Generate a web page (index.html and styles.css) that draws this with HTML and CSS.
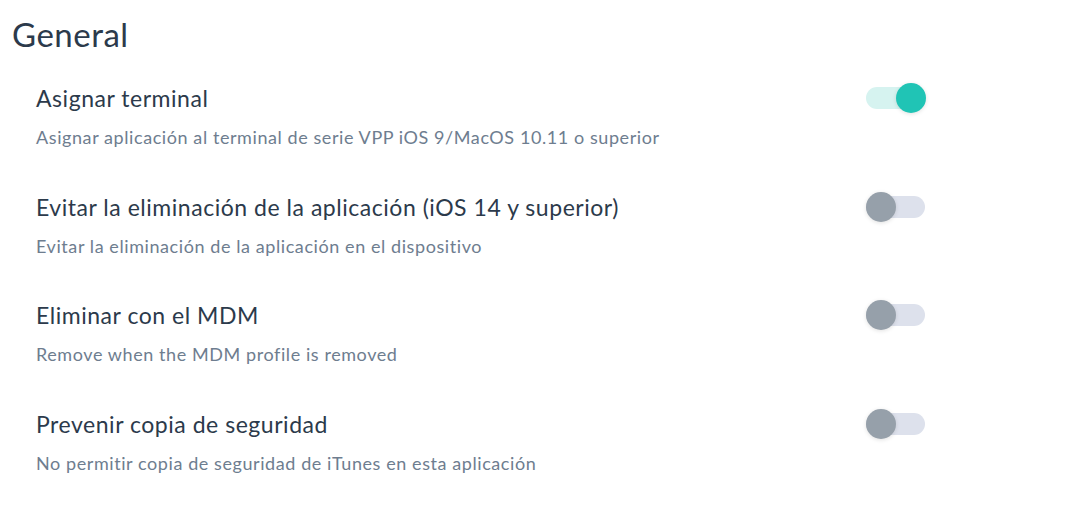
FILE: index.html
```html
<!DOCTYPE html>
<html lang="es">

<head>
    <meta charset="UTF-8">
    <meta name="viewport" content="width=device-width, initial-scale=1.0">
    <title>General</title>
    <link rel="stylesheet" href="styles.css">
</head>

<body>
    <div class="page_div">
        <h1 class="section_title">General</h1>

        <div class="settings">
            <!-- Asignar terminal -->
            <div class="setting_row">
                <div class="setting_text">
                    <div class="setting_name">Asignar terminal</div>
                    <div class="setting_desc">Asignar aplicación al terminal de serie VPP iOS 9/MacOS 10.11 o superior</div>
                </div>
                <div class="switch on">
                    <span class="switch_track"></span>
                    <span class="switch_knob"></span>
                </div>
            </div>

            <div class="setting_row">
                <div class="setting_text">
                    <div class="setting_name">Evitar la eliminación de la aplicación (iOS 14 y superior)</div>
                    <div class="setting_desc">Evitar la eliminación de la aplicación en el dispositivo</div>
                </div>
                <div class="switch">
                    <span class="switch_track"></span>
                    <span class="switch_knob"></span>
                </div>
            </div>

            <div class="setting_row">
                <div class="setting_text">
                    <div class="setting_name">Eliminar con el MDM</div>
                    <div class="setting_desc">Remove when the MDM profile is removed</div>
                </div>
                <div class="switch">
                    <span class="switch_track"></span>
                    <span class="switch_knob"></span>
                </div>
            </div>

            <div class="setting_row">
                <div class="setting_text">
                    <div class="setting_name">Prevenir copia de seguridad</div>
                    <div class="setting_desc">No permitir copia de seguridad de iTunes en esta aplicación</div>
                </div>
                <div class="switch">
                    <span class="switch_track"></span>
                    <span class="switch_knob"></span>
                </div>
            </div>
        </div>
    </div>
</body>

</html>
```

FILE: styles.css
```css
body {
    margin: 0;
    background-color: #ffffff;
    font-family: "Lato", "Noto Sans", sans-serif;
    color: #2c3a4b;
}

.page_div {
    padding: 14px 0 0 12px;
}

.section_title {
    margin: 0;
    font-size: 33px;
    font-weight: 400;
    line-height: 40px;
    letter-spacing: 0.5px;
    color: #2c3a4b;
}

.settings {
    width: 914px;
    padding: 29px 0 0 24px;
    box-sizing: border-box;
}

.setting_row {
    display: flex;
    justify-content: space-between;
    align-items: flex-start;
    margin-bottom: 42.7px;
}

.setting_name {
    font-size: 23px;
    line-height: 30px;
    letter-spacing: 0.53px;
    color: #2c3a4b;
}

.setting_desc {
    margin-top: 12px;
    font-size: 18px;
    line-height: 24px;
    letter-spacing: 0.58px;
    color: #6e7d8f;
}

/* switch */
.switch {
    position: relative;
    width: 60px;
    height: 30px;
    flex-shrink: 0;
}

.switch_track {
    position: absolute;
    left: 0;
    top: 4px;
    width: 59px;
    height: 22px;
    border-radius: 11px;
    background-color: #dde1ec;
}

.switch_knob {
    position: absolute;
    left: 0;
    top: 0;
    width: 30px;
    height: 30px;
    border-radius: 50%;
    background-color: #96a0aa;
    box-shadow: 0 1px 4px rgba(0, 0, 0, 0.12);
}

.switch.on .switch_track {
    background-color: #d6f3f0;
}

.switch.on .switch_knob {
    left: 30px;
    background-color: #20c4b5;
}
```
